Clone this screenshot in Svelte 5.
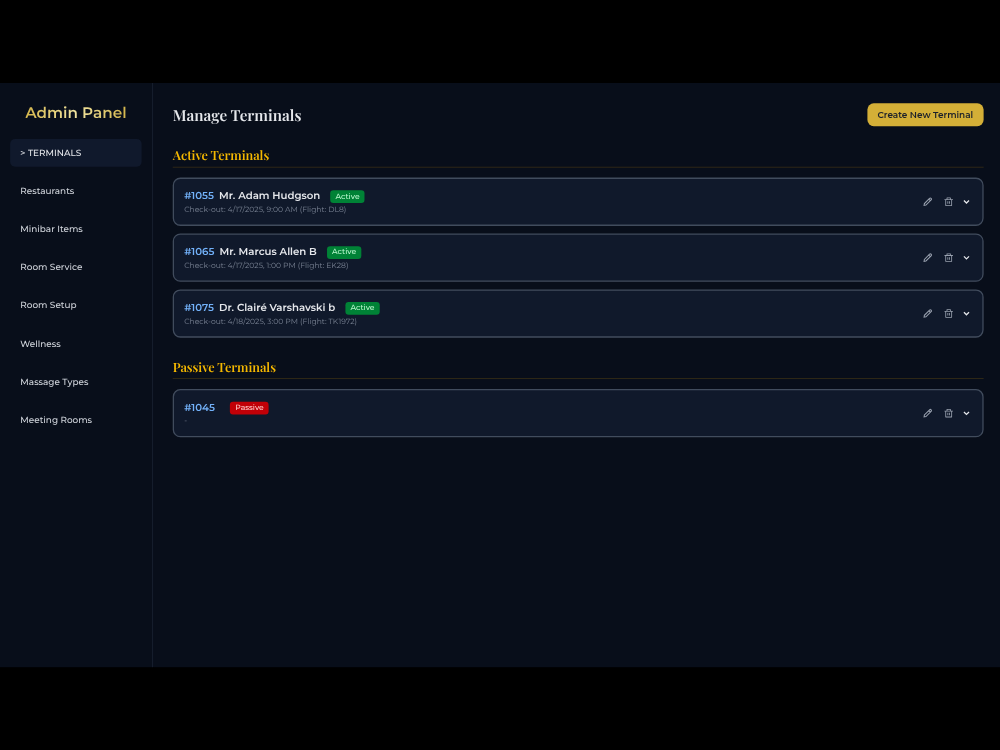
<script>
  const nav = [
    '> TERMINALS',
    'Restaurants',
    'Minibar Items',
    'Room Service',
    'Room Setup',
    'Wellness',
    'Massage Types',
    'Meeting Rooms'
  ];
  const groups = [
    {
      title: 'Active Terminals',
      status: 'Active',
      items: [
        { id: '#1055', name: 'Mr. Adam Hudgson', info: 'Check-out: 4/17/2025, 9:00 AM (Flight: DL8)' },
        { id: '#1065', name: 'Mr. Marcus Allen B', info: 'Check-out: 4/17/2025, 1:00 PM (Flight: EK28)' },
        { id: '#1075', name: 'Dr. Clairé Varshavski b', info: 'Check-out: 4/18/2025, 3:00 PM (Flight: TK1972)' }
      ]
    },
    {
      title: 'Passive Terminals',
      status: 'Passive',
      items: [{ id: '#1045', name: '', info: '-' }]
    }
  ];
</script>

<div class="screen">
  <div class="app">
    <aside>
      <div class="brand">Admin Panel</div>
      <nav>
        {#each nav as item, i}
          <a class:current={i === 0}>{item}</a>
        {/each}
      </nav>
    </aside>
    <main>
      <header>
        <h1>Manage Terminals</h1>
        <button class="create">Create New Terminal</button>
      </header>
      {#each groups as group}
        <section>
          <h2>{group.title}</h2>
          <div class="list">
            {#each group.items as t}
              <article>
                <div>
                  <div class="line">
                    <span class="id">{t.id}</span>
                    <span class="name">{t.name}</span>
                    <span class="badge {group.status.toLowerCase()}">{group.status}</span>
                  </div>
                  <div class="info">{t.info}</div>
                </div>
                <div class="actions">
                  <svg class="pencil" viewBox="0 0 24 24"><path d="m14.5 6 3.5 3.5M16.3 4a2.6 2.6 0 1 1 3.7 3.7L7.8 19.9 3.4 20.6l.7-4.4Z" /></svg>
                  <svg class="trash" viewBox="0 0 24 24"><path d="M17 6H22V8H20V21C20 21.55 19.55 22 19 22H5C4.45 22 4 21.55 4 21V8H2V6H7V3C7 2.45 7.45 2 8 2H16C16.55 2 17 2.45 17 3V6ZM18 8H6V20H18V8ZM9 11H11V17H9V11ZM13 11H15V17H13V11ZM9 4V6H15V4H9Z" /></svg>
                  <svg class="chevron" viewBox="0 0 12 12"><path d="m2 4 4 4 4-4" /></svg>
                </div>
              </article>
            {/each}
          </div>
        </section>
      {/each}
    </main>
  </div>
</div>

<style>
  :global(body) { background: #000; }
  * { box-sizing: border-box; }
  .screen { height: 750px; padding-top: 83px; overflow: hidden; }
  .app {
    display: flex;
    width: 1575px;
    height: 920px;
    transform: scale(0.635);
    transform-origin: 0 0;
    background: #080e1a;
    font-family: Montserrat, sans-serif;
    text-rendering: geometricPrecision;
    white-space: nowrap;
  }
  aside { width: 241px; border-right: 1px solid #1e2939; padding: 32px 17px 0 16px; flex: none; }
  .brand {
    line-height: 32px;
    width: max-content;
    margin: 0 auto;
    font-size: 24px;
    font-weight: 600;
    background: linear-gradient(90deg, #d4b64c, #f0e3a0 50%, #d4b64c);
    background-clip: text;
    color: transparent;
  }
  nav { margin-top: 23.5px; display: flex; flex-direction: column; gap: 16px; }
  nav a {
    height: 44px;
    line-height: 44px;
    padding-left: 16px;
    border-radius: 8px;
    font-size: 14px;
    font-weight: 500;
    color: #d1d5dc;
  }
  nav a.current { background: #10192c; color: #e5e7eb; }
  main { flex: 1; padding: 31.5px 26.5px 0 31px; }
  header { display: flex; justify-content: space-between; align-items: center; height: 36px; }
  h1, h2 { margin: 0; font-family: "Playfair Display", serif; font-weight: 600; }
  h1 { font-size: 24px; line-height: 32px; padding-top: 3px; color: #e5e7eb; }
  .create {
    height: 36px;
    padding: 0 16px;
    border: 0;
    border-radius: 10px;
    background: #d4af37;
    color: #1b202a;
    font: 600 14px Montserrat, sans-serif;
  }
  section { margin-top: 32px; }
  section + section { margin-top: 32.5px; }
  h2 {
    height: 33px;
    line-height: 29px;
    border-bottom: 1px solid #453615;
    color: #f5b800;
    font-size: 20px;
    letter-spacing: -0.1px;
  }
  .list { display: flex; flex-direction: column; gap: 12px; margin-top: 16px; }
  article {
    display: flex;
    justify-content: space-between;
    align-items: center;
    height: 76px;
    padding: 0 19px 0 16px;
    border: 2px solid #414c5d;
    border-radius: 12px;
    background: #10192b;
  }
  .line { display: flex; align-items: center; height: 24px; }
  .id, .name { font-size: 16px; font-weight: 600; color: #e5e7eb; }
  .id { color: #73b2fa; margin-right: 8px; }
  .badge {
    height: 20px;
    line-height: 20px;
    margin-left: 16px;
    padding: 0 8px;
    border-radius: 5px;
    font-size: 12px;
    font-weight: 500;
  }
  .active { background: #008236; color: #b9f8cf; }
  .passive { background: #c10007; color: #ffc9c9; }
  .info { height: 16px; line-height: 17.5px; font-size: 12px; color: #7b8495; }
  .actions { display: flex; align-items: center; }
  svg { fill: none; display: block; }
  .pencil { width: 16px; height: 16px; margin-right: 17px; stroke: #99a1af; stroke-width: 2.5; }
  .trash { width: 16px; height: 16px; margin-right: 14px; fill: #99a1af; }
  .chevron { width: 12px; height: 12px; stroke: #e5e7eb; stroke-width: 2; }
</style>
